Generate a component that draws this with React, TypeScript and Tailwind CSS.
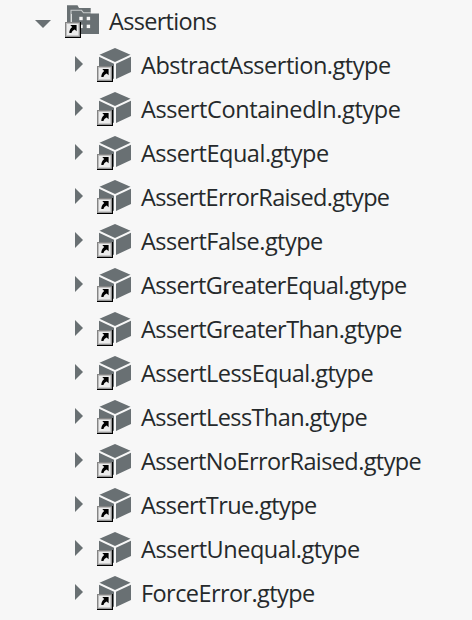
const files: { name: string; spacing: string }[] = [
  { name: 'AbstractAssertion.gtype', spacing: 'tracking-[-0.48px]' },
  { name: 'AssertContainedIn.gtype', spacing: 'tracking-[-0.4px]' },
  { name: 'AssertEqual.gtype', spacing: 'tracking-[-0.49px]' },
  { name: 'AssertErrorRaised.gtype', spacing: 'tracking-[-0.65px]' },
  { name: 'AssertFalse.gtype', spacing: 'tracking-[-0.52px]' },
  { name: 'AssertGreaterEqual.gtype', spacing: 'tracking-[-0.6px]' },
  { name: 'AssertGreaterThan.gtype', spacing: 'tracking-[-0.57px]' },
  { name: 'AssertLessEqual.gtype', spacing: 'tracking-[-0.56px]' },
  { name: 'AssertLessThan.gtype', spacing: 'tracking-[-0.58px]' },
  { name: 'AssertNoErrorRaised.gtype', spacing: 'tracking-[-0.6px]' },
  { name: 'AssertTrue.gtype', spacing: 'tracking-[-0.6px]' },
  { name: 'AssertUnequal.gtype', spacing: 'tracking-[-0.47px]' },
  { name: 'ForceError.gtype', spacing: 'tracking-[-0.58px]' },
];

// Shortcut marker in the lower left corner of an icon.
function LinkBadge() {
  return (
    <g>
      <rect x="0" y="22" width="16" height="16" fill="#000" />
      <rect x="0" y="22" width="15" height="15" fill="#858585" />
      <rect x="1" y="23" width="13.3" height="13.3" fill="#bdbdbd" />
      <rect x="2" y="24" width="11.3" height="11.3" fill="#ececec" />
      <path d="M5.300 25h6.300v6.300l-1.900-1.900c-1.900.8-2.900 2-3.200 3.600H4.300c0-2.200.9-4.300 2.900-5.900z" fill="#000" />
    </g>
  );
}

function CubeIcon() {
  return (
    <svg className="h-11 w-9 shrink-0" viewBox="0 0 36 44">
      <g fill="#697073">
        <path d="M18 4l15.500 6.800L18 18 2.500 10.800z" />
        <path d="M2 12.800l15 7V35L2 28z" />
        <path d="M34 12.800l-15 7V35l15-7z" />
      </g>
      <LinkBadge />
    </svg>
  );
}

function FolderIcon() {
  return (
    <svg className="h-11 w-9 shrink-0" viewBox="0 0 36 44">
      <path d="M2 5.300h10.500l1.500 2.700h11.700v6H6v14H2z" fill="#697073" />
      <path d="M7 34V11h9l2 2.500h16V34z" fill="#697073" />
      <path d="M6 28V10.300h10.500l2 2.500h7.500" fill="none" stroke="#c9cccd" strokeWidth="1.1" />
      <g fill="#f7f7f7">
        <rect x="14.300" y="16.800" width="3.400" height="3.400" />
        <rect x="21.700" y="16.800" width="3.400" height="3.400" />
        <rect x="14.300" y="24.700" width="3.400" height="3.400" />
        <rect x="21.700" y="24.700" width="3.400" height="3.400" />
      </g>
      <LinkBadge />
    </svg>
  );
}

export default function App() {
  return (
    <main className="h-[620px] w-[472px] overflow-hidden bg-[#f7f7f7] font-['Open_Sans','Noto_Sans',sans-serif] text-[23.5px] leading-[42px] text-[#25292b]">
      <div className="flex h-11 items-center pl-[35px]">
        <svg className="h-11 w-4 shrink-0" viewBox="0 0 16 44"><path d="M0 20h16l-8 8z" fill="#697073" /></svg>
        <div className="pl-[14px]"><FolderIcon /></div>
        <span className="pb-0.5 pl-2 tracking-[-0.69px]">Assertions</span>
      </div>
      {files.map((file) => (
        <div key={file.name} className="flex h-11 items-center pl-[75px]">
          <svg className="h-11 w-2 shrink-0" viewBox="0 0 8 44"><path d="M0 12v16l8-8z" fill="#697073" /></svg>
          <div className="pl-[14px]"><CubeIcon /></div>
          <span className={`whitespace-nowrap pb-0.5 pl-2 ${file.spacing}`}>{file.name}</span>
        </div>
      ))}
    </main>
  );
}
